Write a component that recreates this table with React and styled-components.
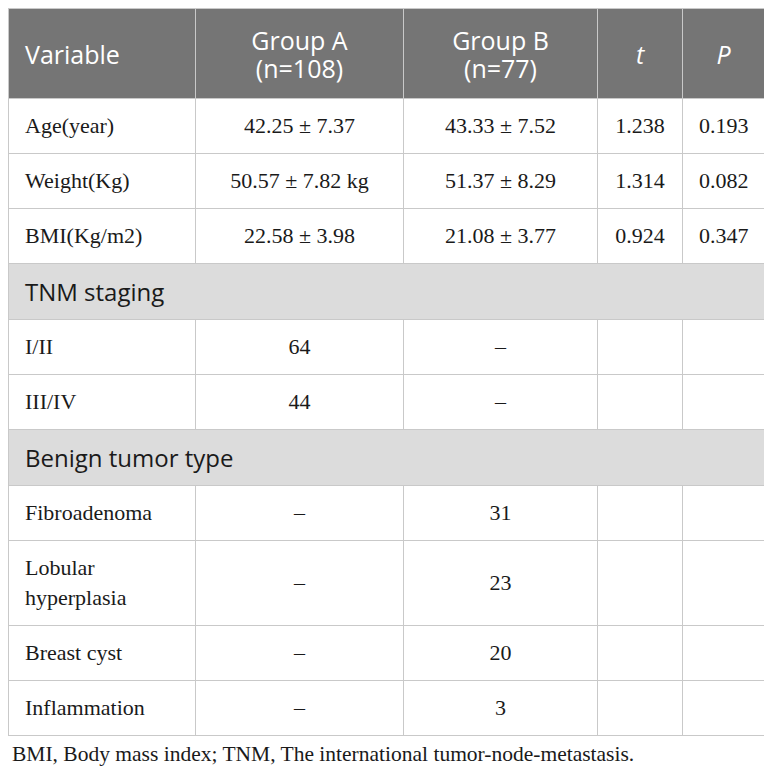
import React from 'react'
import styled, { createGlobalStyle } from 'styled-components'

const Global = createGlobalStyle`
  body {
    margin: 8px;
    background: #fff;
    font-family: "Liberation Serif", "Times New Roman", serif;
    color: #1a1a1a;
  }
`

const Table = styled.table`
  border-collapse: collapse;
  width: 756px;
  table-layout: fixed;
`

const HeadCell = styled.th`
  background: #757575;
  color: #fff;
  font-family: "Open Sans", "Noto Sans", sans-serif;
  font-weight: 400;
  font-size: 25px;
  line-height: 28px;
  height: 89px;
  padding: 0 16px;
  border: 1px solid #c9c9c9;
  text-align: ${p => (p.$left ? 'left' : 'center')};
  font-style: ${p => (p.$italic ? 'italic' : 'normal')};
`

// two-line group heading: one text that wraps in a narrow box
const Wrap = styled.span`
  display: inline-block;
  max-width: 125px;
`

const Cell = styled.td`
  font-size: 22px;
  line-height: 30px;
  height: ${p => p.$tall ? 85 : 55}px;
  padding: 0 16px;
  border: 1px solid #c9c9c9;
  text-align: ${p => (p.$left ? 'left' : 'center')};
  box-sizing: border-box;
`

const SectionCell = styled.td`
  background: #dcdcdc;
  font-family: "Open Sans", "Noto Sans", sans-serif;
  font-size: 24px;
  height: 56px;
  padding: 0 16px;
  border: 1px solid #c9c9c9;
  color: #1a1a1a;
  box-sizing: border-box;
`

const Note = styled.p`
  margin: 5px 0 0 4px;
  font-size: 21.5px;
  line-height: 26px;
  color: #1a1a1a;
`

const cols = [187, 208, 194, 85, 82]

const rows = [
  { type: 'data', cells: ['Age(year)', '42.25 ± 7.37', '43.33 ± 7.52', '1.238', '0.193'] },
  { type: 'data', cells: ['Weight(Kg)', '50.57 ± 7.82 kg', '51.37 ± 8.29', '1.314', '0.082'] },
  { type: 'data', cells: ['BMI(Kg/m2)', '22.58 ± 3.98', '21.08 ± 3.77', '0.924', '0.347'] },
  { type: 'section', label: 'TNM staging' },
  { type: 'data', cells: ['I/II', '64', '–', '', ''] },
  { type: 'data', cells: ['III/IV', '44', '–', '', ''] },
  { type: 'section', label: 'Benign tumor type' },
  { type: 'data', cells: ['Fibroadenoma', '–', '31', '', ''] },
  { type: 'data', tall: true, cells: ['Lobular hyperplasia', '–', '23', '', ''] },
  { type: 'data', cells: ['Breast cyst', '–', '20', '', ''] },
  { type: 'data', cells: ['Inflammation', '–', '3', '', ''] },
]

export default function App() {
  return (
    <>
      <Global />
      <Table>
        <colgroup>
          {cols.map((w, i) => <col key={i} style={{ width: w }} />)}
        </colgroup>
        <thead>
          <tr>
            <HeadCell $left>Variable</HeadCell>
            <HeadCell><Wrap>Group A (n=108)</Wrap></HeadCell>
            <HeadCell><Wrap>Group B (n=77)</Wrap></HeadCell>
            <HeadCell $italic>t</HeadCell>
            <HeadCell $italic>P</HeadCell>
          </tr>
        </thead>
        <tbody>
          {rows.map((r, i) =>
            r.type === 'section' ? (
              <tr key={i}><SectionCell colSpan={5}>{r.label}</SectionCell></tr>
            ) : (
              <tr key={i}>
                {r.cells.map((c, j) => (
                  <Cell key={j} $left={j === 0} $tall={r.tall}>{c}</Cell>
                ))}
              </tr>
            )
          )}
        </tbody>
      </Table>
      <Note>BMI, Body mass index; TNM, The international tumor-node-metastasis.</Note>
    </>
  )
}
